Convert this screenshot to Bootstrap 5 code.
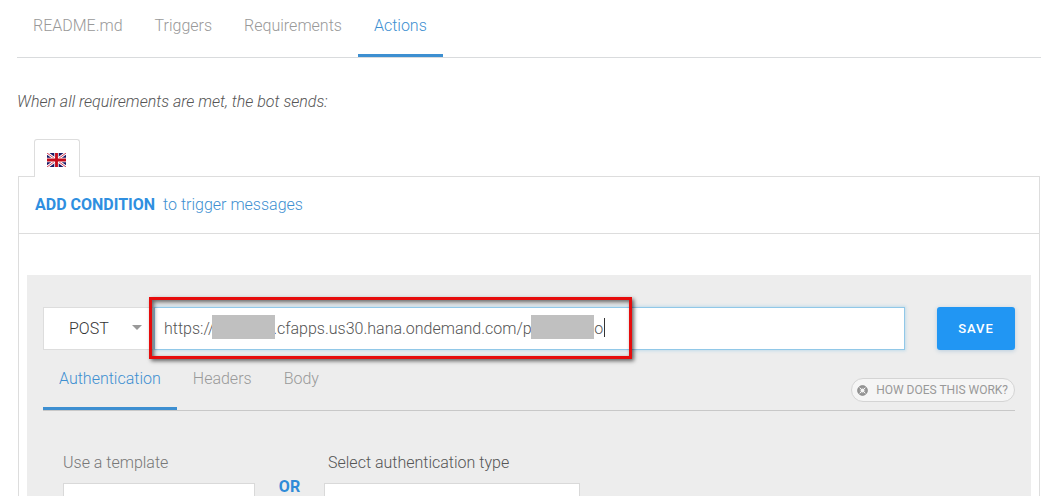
<!DOCTYPE html>
<html lang="en">
<head>
<meta charset="utf-8">
<meta name="viewport" content="width=device-width, initial-scale=1">
<title>Bot skill – Actions</title>
<link rel="stylesheet" href="https://cdn.jsdelivr.net/npm/bootstrap@5.3.0/dist/css/bootstrap.min.css">
<style>
  body { font-family: Roboto, "Liberation Sans", sans-serif; font-size: 16px; line-height: 24px; font-weight: 300; color: #555; background: #fff; }
  .page { padding: 0 14px 0 17px; }
  .tab-bar { border-bottom: 1px solid #d9dbdd; }
  .tab-bar .nav-link { padding: 14px 16px 16px; color: #999; border-bottom: 3px solid transparent; border-radius: 0; }
  .tab-bar .nav-link.active { color: #3d8fd1; border-bottom-color: #3d8fd1; }
  .intro { margin: 32px 0 25px; }
  .lang-tab { width: 46px; height: 38px; margin: 0 0 -1px 17px; background: #fff; border: 1px solid #ddd; border-bottom: 0; border-radius: 3px 3px 0 0; position: relative; padding: 2px 2px 0 0; }
  .panel { border: 1px solid #ddd; border-bottom: 0; margin: 0 1px; padding-bottom: 40px; }
  .condition { padding: 16px; border-bottom: 1px solid #ddd; color: #3d8fd1; }
  .condition a { color: #2f8fe0; font-weight: 700; margin-right: 8px; }
  .request { background: #ededed; margin: 41px 8px 0; padding: 32px 16px 60px; }
  .method { width: 111px; }
  .method .form-select { height: 43px; border: 1px solid #ddd; border-radius: 0; background: #fff; color: #333; font-size: 16px; font-weight: 300; padding: 0 32px 0 25px; }
  .method .arrow { position: absolute; right: 12px; top: 18px; border: 5px solid transparent; border-top-color: #999; border-bottom: 0; pointer-events: none; }
  .url .form-control { height: 43px; border: 1px solid #91c8e8; border-radius: 0; box-shadow: 0 0 3px 1px #c2dcea; color: #555; font-size: 16px; font-weight: 300; padding: 0 9px; }
  .veil { position: absolute; top: 8px; width: 63px; height: 24px; background: #c0c0c0; }
  .veil-host { left: 58px; }
  .veil-path { left: 377px; }
  .text-caret { position: absolute; left: 450px; top: 11px; width: 1px; height: 19px; background: #333; }
  .callout-box { position: absolute; left: -5px; top: -10px; width: 483px; height: 62px; border: 3px solid #e60c0c; box-shadow: 2px 2px 4px rgba(0,0,0,.6), inset 2px 2px 4px rgba(0,0,0,.6); pointer-events: none; }
  .save { width: 78px; height: 43px; margin-left: 32px; padding: 0; background: #2196f3; color: #fff; border: 0; border-radius: 3px; font-size: 13px; font-weight: 500; letter-spacing: 1px; box-shadow: 0 1px 4px rgba(33,110,180,.25); }
  .sub-bar { border-color: #c8c8c8; }
  .sub-bar .nav-link { padding-top: 17px; }
  .help { height: 24px; margin-bottom: 8px; padding: 0 6px 0 5px; background: #f5f5f5; border: 1px solid #d4d4d4; border-radius: 12px; color: #999; font-size: 12px; line-height: 20px; font-weight: 400; }
  .fields { padding: 40px 20px 0; }
  .fields label { display: block; margin-bottom: 8px; }
  .fields .form-select { height: 42px; border: 1px solid #d9d9d9; border-radius: 0; background: #fff; }
  .template { width: 192px; }
  .template label { color: #777; }
  .auth { width: 256px; }
  .auth label { padding-left: 4px; }
  .or { width: 69px; padding-top: 24px; color: #2f8bd8; font-weight: 700; }
</style>
</head>
<body>
<main class="page vh-100 overflow-hidden">
  <nav class="nav tab-bar" aria-label="Skill">
    <a class="nav-link" href="#">README.md</a>
    <a class="nav-link" href="#">Triggers</a>
    <a class="nav-link" href="#">Requirements</a>
    <a class="nav-link active" aria-current="page" href="#">Actions</a>
  </nav>

  <p class="intro fst-italic">When all requirements are met, the bot sends:</p>

  <button type="button" class="lang-tab d-flex align-items-center justify-content-center" aria-label="English">
    <svg width="19" height="14" viewBox="0 0 60 44" preserveAspectRatio="none" aria-hidden="true">
      <rect width="60" height="44" fill="#1a1764"/>
      <path d="M0 0 60 44M60 0 0 44" stroke="#fff" stroke-width="9"/>
      <path d="M0 0 60 44M60 0 0 44" stroke="#d0304a" stroke-width="3"/>
      <path d="M30 0V44M0 22H60" stroke="#fff" stroke-width="14"/>
      <path d="M30 0V44M0 22H60" stroke="#c40c1c" stroke-width="9"/>
    </svg>
  </button>

  <section class="panel">
    <div class="condition"><a href="#" class="text-decoration-none">ADD CONDITION</a>to trigger messages</div>

    <form class="request">
      <div class="d-flex">
        <div class="method position-relative flex-shrink-0">
          <select class="form-select" aria-label="Method"><option>POST</option><option>GET</option></select>
          <span class="arrow"></span>
        </div>
        <div class="url position-relative flex-grow-1">
          <input class="form-control" type="text" aria-label="Request URL" value="https://&emsp;&emsp;&emsp;&ensp;&hairsp;.cfapps.us30.hana.ondemand.com/p&emsp;&emsp;&emsp;&ensp;&nbsp;&hairsp;o">
          <span class="veil veil-host"></span>
          <span class="veil veil-path"></span>
          <span class="text-caret"></span>
          <span class="callout-box"></span>
        </div>
        <button type="button" class="save btn flex-shrink-0">SAVE</button>
      </div>

      <div class="tab-bar sub-bar d-flex justify-content-between align-items-end">
        <nav class="nav" aria-label="Request">
          <a class="nav-link active" href="#">Authentication</a>
          <a class="nav-link" href="#">Headers</a>
          <a class="nav-link" href="#">Body</a>
        </nav>
        <button type="button" class="help d-flex align-items-center">
          <svg class="me-2" width="11" height="11" viewBox="0 0 22 22" fill="none" aria-hidden="true">
            <circle cx="11" cy="11" r="7" stroke="#999" stroke-width="6"/>
            <path d="M4 4l4 4M18 4l-4 4M4 18l4-4M18 18l-4-4" stroke="#f5f5f5" stroke-width="2"/>
            <circle cx="11" cy="11" r="9.5" stroke="#888" stroke-width="2"/>
          </svg>
          HOW DOES THIS WORK?
        </button>
      </div>

      <div class="fields d-flex">
        <div class="template">
          <label for="template">Use a template</label>
          <select id="template" class="form-select"><option></option></select>
        </div>
        <div class="or text-center">OR</div>
        <div class="auth">
          <label for="auth">Select authentication type</label>
          <select id="auth" class="form-select"><option></option></select>
        </div>
      </div>
    </form>
  </section>
</main>
<script src="https://cdn.jsdelivr.net/npm/bootstrap@5.3.0/dist/js/bootstrap.bundle.min.js"></script>
</body>
</html>
